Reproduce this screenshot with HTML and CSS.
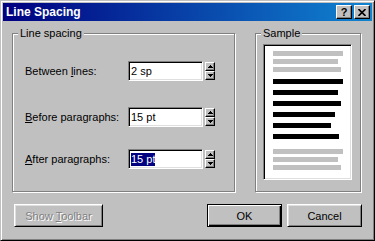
FILE: index.html
```html
<!DOCTYPE html>
<html lang="en">
<head>
    <meta charset="UTF-8">
    <title>Line Spacing</title>
    <link rel="stylesheet" href="styles.css">
</head>
<body>
    <div class="window">
        <div class="titlebar">
            <span class="title">Line Spacing</span>
            <div class="title-buttons">
                <button class="title-btn help">?</button>
                <button class="title-btn">
                    <svg width="8" height="7" viewBox="0 0 8 7"><path d="M0.5 0L7.5 7M7.5 0L0.5 7" stroke="#000" stroke-width="1.6"/></svg>
                </button>
            </div>
        </div>

        <div class="content">
            <div class="groups">
                <div class="group spacing">
                    <span class="group-label">Line spacing</span>

                    <div class="row">
                        <label class="row-label">Between <u>l</u>ines:</label>
                        <div class="edit">2 sp</div>
                        <div class="spinner">
                            <button class="spin"><svg width="5" height="3"><path d="M2 0h1v1h1v1h1v1H0V2h1V1h1z"/></svg></button>
                            <button class="spin"><svg width="5" height="3"><path d="M0 0h5v1H4v1H3v1H2V2H1V1H0z"/></svg></button>
                        </div>
                    </div>

                    <div class="row second">
                        <label class="row-label"><u>B</u>efore paragraphs:</label>
                        <div class="edit">15 pt</div>
                        <div class="spinner">
                            <button class="spin"><svg width="5" height="3"><path d="M2 0h1v1h1v1h1v1H0V2h1V1h1z"/></svg></button>
                            <button class="spin"><svg width="5" height="3"><path d="M0 0h5v1H4v1H3v1H2V2H1V1H0z"/></svg></button>
                        </div>
                    </div>

                    <div class="row third">
                        <label class="row-label"><u>A</u>fter paragraphs:</label>
                        <div class="edit"><span class="selected">15 pt</span></div>
                        <div class="spinner">
                            <button class="spin"><svg width="5" height="3"><path d="M2 0h1v1h1v1h1v1H0V2h1V1h1z"/></svg></button>
                            <button class="spin"><svg width="5" height="3"><path d="M0 0h5v1H4v1H3v1H2V2H1V1H0z"/></svg></button>
                        </div>
                    </div>
                </div>

                <div class="group sample">
                    <span class="group-label">Sample</span>
                    <div class="preview">
                        <div class="para faint">
                            <div class="line w70"></div>
                            <div class="line w65"></div>
                            <div class="line w68"></div>
                        </div>
                        <div class="para current">
                            <div class="line w70"></div>
                            <div class="line w65"></div>
                            <div class="line w68"></div>
                            <div class="line w62"></div>
                            <div class="line w58"></div>
                            <div class="line w66"></div>
                        </div>
                        <div class="para faint next">
                            <div class="line w70"></div>
                            <div class="line w65"></div>
                            <div class="line w68"></div>
                        </div>
                    </div>
                </div>
            </div>

            <div class="actions">
                <button class="btn toolbar" disabled>Show <u>T</u>oolbar</button>
                <button class="btn default">OK</button>
                <button class="btn">Cancel</button>
            </div>
        </div>
    </div>
</body>
</html>
```

FILE: styles.css
```css
* {
    margin: 0;
    padding: 0;
    box-sizing: border-box;
}

body {
    font-family: 'Liberation Sans', Arial, sans-serif;
    font-size: 11px;
    color: #000;
    background: #c0c0c0;
    width: 375px;
    height: 241px;
    overflow: hidden;
}

button {
    font: inherit;
    color: inherit;
    background: #c0c0c0;
}

.window {
    width: 375px;
    height: 241px;
    background: #c0c0c0;
    border: 1px solid;
    border-color: #c0c0c0 #000 #000 #c0c0c0;
    box-shadow: inset 1px 1px #fff, inset -1px -1px #808080;
    padding: 2px;
}

/* title bar */
.titlebar {
    height: 18px;
    display: flex;
    align-items: center;
    justify-content: space-between;
    padding: 0 2px 0 3px;
    background: linear-gradient(90deg, #000080 0%, #1084d0 100%);
}

.title {
    color: #fff;
    font-size: 12px;
    font-weight: bold;
}

.title-buttons {
    display: flex;
    gap: 2px;
}

.title-btn {
    width: 16px;
    height: 14px;
    display: flex;
    align-items: center;
    justify-content: center;
    border: 1px solid;
    border-color: #fff #000 #000 #fff;
    box-shadow: inset -1px -1px #808080;
    font-size: 11px;
    font-weight: bold;
    line-height: 1;
}

/* body */
.content {
    padding: 12px 11px 0 9px;
}

.groups {
    display: flex;
    gap: 20px;
}

.group {
    position: relative;
    height: 159px;
    border: 1px solid #808080;
    box-shadow: inset 1px 1px #fff, 1px 1px #fff;
}

.group-label {
    position: absolute;
    top: -7px;
    left: 5px;
    padding: 0 2px;
    line-height: 13px;
    background: #c0c0c0;
}

.spacing {
    width: 223px;
    padding: 27px 0 0 12px;
}

.sample {
    width: 106px;
}

.row {
    display: flex;
    align-items: center;
    height: 20px;
}

.row.second {
    margin-top: 26px;
}

.row.third {
    margin-top: 22px;
}

.row-label {
    width: 103px;
}

.edit {
    width: 75px;
    height: 20px;
    background: #fff;
    border: 1px solid;
    border-color: #808080 #fff #fff #808080;
    box-shadow: inset 1px 1px #000, inset -1px -1px #dfdfdf;
    padding: 0 2px;
    line-height: 18px;
}

.selected {
    background: #000080;
    color: #fff;
    display: inline-block;
    line-height: 13px;
}

.spinner {
    margin-left: 2px;
    display: flex;
    flex-direction: column;
}

.spin {
    width: 10px;
    height: 9px;
    display: flex;
    align-items: center;
    justify-content: center;
    border: 1px solid;
    border-color: #fff #000 #000 #fff;
    box-shadow: inset -1px -1px #808080;
}

.spin svg {
    display: block;
}

/* sample page */
.preview {
    width: 89px;
    height: 136px;
    margin: 10px 0 0 7px;
    background: #fff;
    border: 1px solid;
    border-color: #808080 #fff #fff #808080;
    box-shadow: inset 1px 1px #000, inset -1px -1px #dfdfdf;
    padding: 6px 0 0 9px;
}

.para {
    display: flex;
    flex-direction: column;
}

.para.faint {
    gap: 3px;
}

.para.current {
    gap: 6px;
    margin-top: 7px;
}

.para.next {
    margin-top: 10px;
}

.line {
    height: 5px;
    background: #000;
}

.faint .line {
    background: #c0c0c0;
}

.w70 { width: 70px; }
.w68 { width: 68px; }
.w66 { width: 66px; }
.w65 { width: 65px; }
.w62 { width: 62px; }
.w58 { width: 58px; }

/* buttons */
.actions {
    display: flex;
    gap: 5px;
    margin: 12px -1px 0 2px;
}

.btn {
    width: 75px;
    height: 23px;
    border: 1px solid;
    border-color: #fff #000 #000 #fff;
    box-shadow: inset 1px 1px #dfdfdf, inset -1px -1px #808080;
}

.btn.toolbar {
    width: 89px;
    margin-right: auto;
    color: #808080;
    text-shadow: 1px 1px #fff;
}

.btn.default {
    border-color: #000;
    box-shadow: inset 1px 1px #fff, inset -1px -1px #000, inset -2px -2px #808080;
}
```
